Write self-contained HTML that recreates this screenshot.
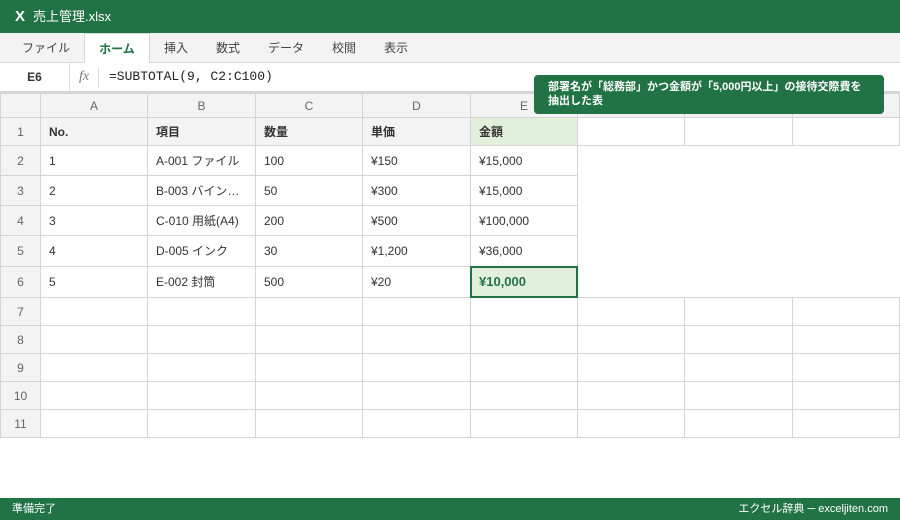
<!DOCTYPE html>
<html><head><meta charset="utf-8"><style>
*{margin:0;padding:0;box-sizing:border-box}
body{width:900px;height:520px;overflow:hidden;background:#fff;font-family:"Liberation Sans","Noto Sans CJK JP",sans-serif;color:#333;position:relative}
.title{position:absolute;left:0;top:0;width:900px;height:33px;background:#217346;color:#fff;font-size:13px;line-height:33px;padding-left:15px}
.title b{font-size:15px;margin-right:8px}
.tabs{position:absolute;left:0;top:33px;width:900px;height:30px;background:#f3f3f3;border-bottom:1px solid #d6d6d6}
.tab{position:absolute;top:0;height:30px;line-height:30px;font-size:12px;color:#444}
.tab.act{background:#fff;border:1px solid #d6d6d6;border-bottom:1px solid #fff;color:#217346;font-weight:bold;height:31px;text-align:center}
.fbar{position:absolute;left:0;top:63px;width:900px;height:30px;background:#fff;border-bottom:2px solid #d6d6d6}
.name{position:absolute;left:0;top:0;width:70px;height:28px;line-height:28px;text-align:center;font-weight:bold;font-size:12px;border-right:1px solid #ddd}
.fx{position:absolute;left:79px;top:0;line-height:28px;font-style:italic;font-size:14px;color:#777;font-family:"Liberation Serif",serif}
.sep{position:absolute;left:98px;top:4px;width:1px;height:20px;background:#ddd}
.formula{position:absolute;left:109px;top:0;line-height:28px;font-family:"Liberation Mono",monospace;font-size:13px;color:#222}
table{position:absolute;left:0;top:93px;border-collapse:collapse;table-layout:fixed;font-size:12px}
td{border:1px solid #d4d4d4;padding:0 0 0 8px;white-space:nowrap;overflow:hidden;line-height:16px;vertical-align:middle}
td.h{background:#f3f3f3;color:#666;text-align:center;padding:0}
tr.ch td{background:#f3f3f3;color:#666;text-align:center;padding:0;height:24px}
tr.r1 td{background:#f3f3f3;font-weight:bold;height:28px}
tr.r1 td.e{background:#e2efda}
tr.r1 td.w{background:#fff}
td.n{border:none}
.sel{position:absolute;left:470px;top:266px;width:108px;height:32px;border:2px solid #217346;background:#e2efda;color:#217346;font-weight:bold;font-size:13px;line-height:28px;padding-left:7px}
.tip{position:absolute;left:534px;top:75px;width:350px;height:39px;background:#217346;border-radius:4px;color:#fff;font-weight:bold;font-size:11px;line-height:14px;padding:5px 14px}
.status{position:absolute;left:0;top:498px;width:900px;height:22px;background:#217346;color:#fff;font-size:11px;line-height:22px;padding:0 12px}
.status span{float:right}
</style></head><body>
<div class="title"><b>X</b>売上管理.xlsx</div>
<div class="tabs">
<div class="tab" style="left:22px">ファイル</div>
<div class="tab act" style="left:84px;width:66px">ホーム</div>
<div class="tab" style="left:164px">挿入</div>
<div class="tab" style="left:216px">数式</div>
<div class="tab" style="left:268px">データ</div>
<div class="tab" style="left:332px">校閲</div>
<div class="tab" style="left:384px">表示</div>
</div>
<div class="fbar"><div class="name">E6</div><div class="fx">fx</div><div class="sep"></div><div class="formula">=SUBTOTAL(9, C2:C100)</div></div>
<table>
<colgroup><col style="width:40px"><col style="width:107px"><col style="width:108px"><col style="width:107px"><col style="width:108px"><col style="width:107px"><col style="width:107px"><col style="width:108px"><col style="width:107px"></colgroup>
<tr class="ch"><td></td><td>A</td><td>B</td><td>C</td><td>D</td><td>E</td><td>F</td><td>G</td><td>H</td></tr>
<tr class="r1"><td class="h" style="font-weight:normal">1</td><td>No.</td><td>項目</td><td>数量</td><td>単価</td><td class="e">金額</td><td class="w"></td><td class="w"></td><td class="w"></td></tr>
<tr style="height:30px"><td class="h">2</td><td>1</td><td>A-001 ファイル</td><td>100</td><td>¥150</td><td>¥15,000</td><td class="n"></td><td class="n"></td><td class="n"></td></tr>
<tr style="height:30px"><td class="h">3</td><td>2</td><td>B-003 バイン…</td><td>50</td><td>¥300</td><td>¥15,000</td><td class="n"></td><td class="n"></td><td class="n"></td></tr>
<tr style="height:30px"><td class="h">4</td><td>3</td><td>C-010 用紙(A4)</td><td>200</td><td>¥500</td><td>¥100,000</td><td class="n"></td><td class="n"></td><td class="n"></td></tr>
<tr style="height:31px"><td class="h">5</td><td>4</td><td>D-005 インク</td><td>30</td><td>¥1,200</td><td>¥36,000</td><td class="n"></td><td class="n"></td><td class="n"></td></tr>
<tr style="height:31px"><td class="h">6</td><td>5</td><td>E-002 封筒</td><td>500</td><td>¥20</td><td></td><td class="n"></td><td class="n"></td><td class="n"></td></tr>
<tr style="height:28px"><td class="h">7</td><td></td><td></td><td></td><td></td><td></td><td></td><td></td><td></td></tr>
<tr style="height:28px"><td class="h">8</td><td></td><td></td><td></td><td></td><td></td><td></td><td></td><td></td></tr>
<tr style="height:28px"><td class="h">9</td><td></td><td></td><td></td><td></td><td></td><td></td><td></td><td></td></tr>
<tr style="height:28px"><td class="h">10</td><td></td><td></td><td></td><td></td><td></td><td></td><td></td><td></td></tr>
<tr style="height:28px"><td class="h">11</td><td></td><td></td><td></td><td></td><td></td><td></td><td></td><td></td></tr>
</table>
<div class="sel">¥10,000</div>
<div class="tip">部署名が「総務部」かつ金額が「5,000円以上」の接待交際費を<br>抽出した表</div>
<div class="status">準備完了<span>エクセル辞典 ─ exceljiten.com</span></div>
</body></html>
